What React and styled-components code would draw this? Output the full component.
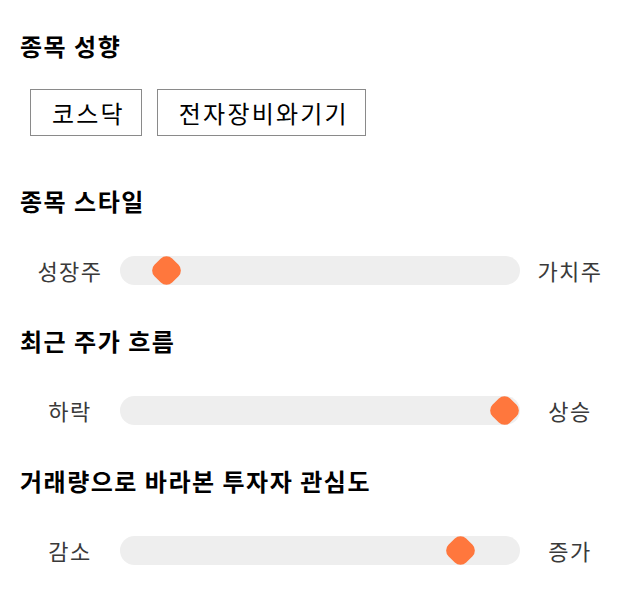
import React from 'react'
import { styled, createGlobalStyle } from 'styled-components'

const GlobalStyle = createGlobalStyle`
    body {
        margin: 0;
        background: #ffffff;
        font-family: "Noto Sans CJK KR", "Noto Sans", sans-serif;
        color: #000;
    }
`

const Page = styled.div`
    width: 640px;
    padding: 30px 20px 0 20px;
    box-sizing: border-box;
`

const Section = styled.section`
    display: flex;
    flex-direction: column;
`

const Title = styled.h3`
    margin: 0;
    font-size: 24px;
    font-weight: 700;
    line-height: 32px;
    letter-spacing: 1.5px;
`

const TagRow = styled.div`
    display: flex;
    gap: 15px;
    padding: 27px 0 0 10px;
    margin-bottom: 49px;
`

const Tag = styled.div`
    border: 1px solid #8a8a8a;
    padding: 0 16px 0 21px;
    height: 47px;
    box-sizing: border-box;
    display: flex;
    align-items: center;
    font-size: 24px;
    letter-spacing: 2.2px;
`

const SliderRow = styled.div`
    display: grid;
    grid-template-columns: 100px 400px 100px;
    align-items: center;
    margin: 37px 0 ${(p) => p.$gap}px 0;
`

const Label = styled.span`
    text-align: center;
    font-size: 22px;
    letter-spacing: 1.5px;
    color: #3a3a3a;
`

const Track = styled.div`
    position: relative;
    height: 29px;
    border-radius: 15px;
    background: #eeeeee;
`

const Thumb = styled.div`
    position: absolute;
    top: 50%;
    width: 25px;
    height: 25px;
    margin-left: -12.5px;
    margin-top: -12.5px;
    border-radius: 8px;
    background: #ff773d;
    transform: rotate(45deg);
`

const sliders = [
    { title: '종목 스타일', left: '성장주', right: '가치주', pos: 46, gap: 39 },
    { title: '최근 주가 흐름', left: '하락', right: '상승', pos: 384, gap: 39 },
    { title: '거래량으로 바라본 투자자 관심도', left: '감소', right: '증가', pos: 340, gap: 0 },
]

const App = () => {
    return (
        <Page>
            <GlobalStyle />
            <Section>
                <Title>종목 성향</Title>
                <TagRow>
                    <Tag>코스닥</Tag>
                    <Tag>전자장비와기기</Tag>
                </TagRow>
            </Section>
            {sliders.map((s) => (
                <Section key={s.title}>
                    <Title>{s.title}</Title>
                    <SliderRow $gap={s.gap}>
                        <Label>{s.left}</Label>
                        <Track>
                            <Thumb style={{ left: s.pos }} />
                        </Track>
                        <Label>{s.right}</Label>
                    </SliderRow>
                </Section>
            ))}
        </Page>
    )
}

export default App
